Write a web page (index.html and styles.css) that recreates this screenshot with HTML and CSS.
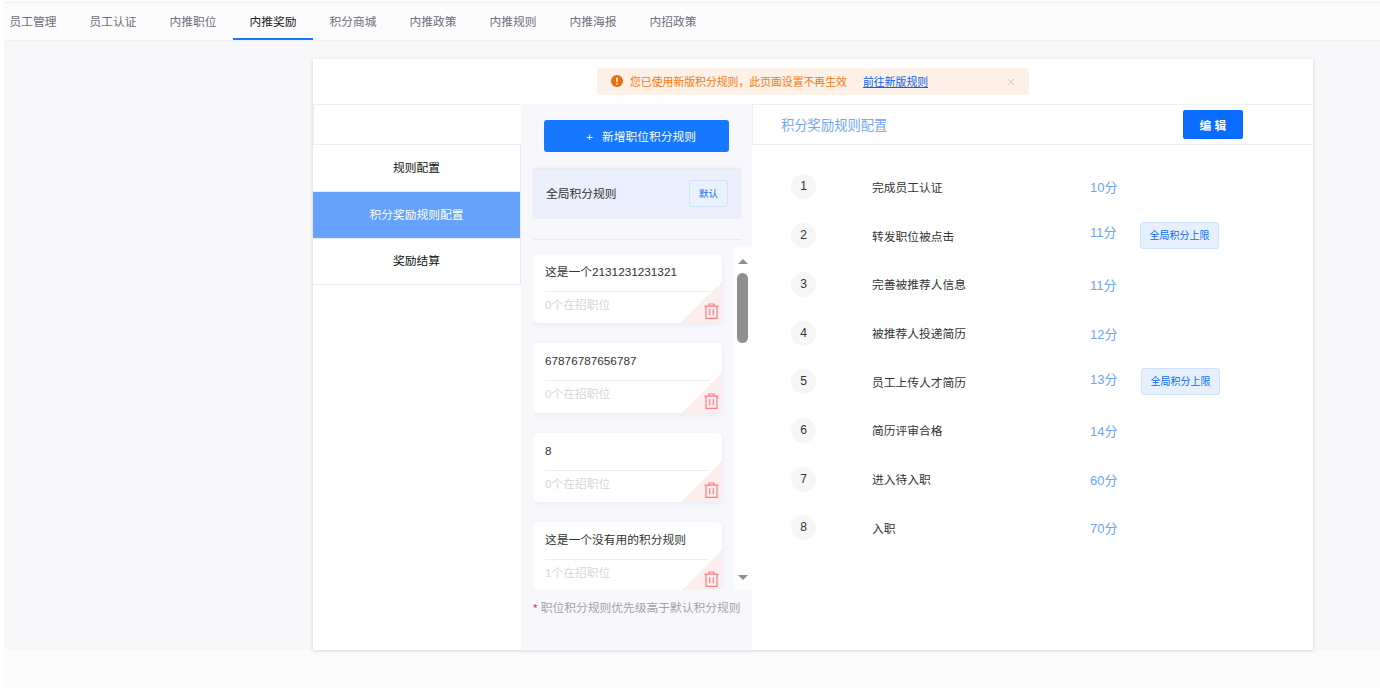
FILE: index.html
```html
<!DOCTYPE html>
<html lang="zh-CN">
<head>
  <meta charset="UTF-8" />
  <meta name="viewport" content="width=device-width, initial-scale=1.0" />
  <title>内推奖励</title>
  <link rel="stylesheet" href="styles.css">
</head>
<body>
  <div class="page">
    <div class="tabs">
      <a class="tab">员工管理</a>
      <a class="tab">员工认证</a>
      <a class="tab">内推职位</a>
      <a class="tab active">内推奖励</a>
      <a class="tab">积分商城</a>
      <a class="tab">内推政策</a>
      <a class="tab">内推规则</a>
      <a class="tab">内推海报</a>
      <a class="tab">内招政策</a>
    </div>

    <div class="main">
      <div class="panel">
        <div class="alert-row">
          <div class="alert">
            <svg class="alert-icon" viewBox="0 0 12 12"><circle cx="6" cy="6" r="6" fill="#ed6c0c"/><rect x="5.2" y="2.6" width="1.6" height="4.4" rx=".6" fill="#fff"/><rect x="5.2" y="8" width="1.6" height="1.6" rx=".7" fill="#fff"/></svg>
            <span class="alert-text">您已使用新版积分规则，此页面设置不再生效</span>
            <a class="alert-link">前往新版规则</a>
            <svg class="alert-close" viewBox="0 0 8 8"><path d="M1 1l6 6M7 1L1 7" stroke="#c9c9cf" stroke-width="1" fill="none"/></svg>
          </div>
        </div>

        <div class="columns">
          <div class="side">
            <div class="side-head"></div>
            <div class="side-item">规则配置</div>
            <div class="side-item active">积分奖励规则配置</div>
            <div class="side-item">奖励结算</div>
          </div>

          <div class="middle">
            <button class="add-btn"><span class="plus">+</span>新增职位积分规则</button>
            <div class="global-card">
              <span class="global-name">全局积分规则</span>
              <span class="default-tag">默认</span>
            </div>
            <div class="divider"></div>
            <div class="list-wrap">
              <div class="list">
                <div class="rule-card">
                  <div class="rule-name">这是一个2131231231321</div>
                  <div class="rule-count">0个在招职位</div>
                  <div class="corner"></div>
                  <svg class="trash" viewBox="0 0 15 16"><use href="#trash-icon"/></svg>
                </div>
                <div class="rule-card">
                  <div class="rule-name">67876787656787</div>
                  <div class="rule-count">0个在招职位</div>
                  <div class="corner"></div>
                  <svg class="trash" viewBox="0 0 15 16"><use href="#trash-icon"/></svg>
                </div>
                <div class="rule-card">
                  <div class="rule-name">8</div>
                  <div class="rule-count">0个在招职位</div>
                  <div class="corner"></div>
                  <svg class="trash" viewBox="0 0 15 16"><use href="#trash-icon"/></svg>
                </div>
                <div class="rule-card">
                  <div class="rule-name">这是一个没有用的积分规则</div>
                  <div class="rule-count">1个在招职位</div>
                  <div class="corner"></div>
                  <svg class="trash" viewBox="0 0 15 16"><use href="#trash-icon"/></svg>
                </div>
              </div>
              <div class="scrollbar">
                <span class="arrow-up"></span>
                <span class="thumb"></span>
                <span class="arrow-down"></span>
              </div>
            </div>
            <div class="note"><span class="star">*</span> 职位积分规则优先级高于默认积分规则</div>
          </div>

          <div class="right">
            <div class="right-head">
              <span class="right-title">积分奖励规则配置</span>
              <button class="edit-btn">编 辑</button>
            </div>
            <div class="rows">
              <div class="row"><span class="num">1</span><span class="name">完成员工认证</span><span class="score">10分</span></div>
              <div class="row"><span class="num">2</span><span class="name">转发职位被点击</span><span class="score raised">11分</span><span class="cap-tag">全局积分上限</span></div>
              <div class="row"><span class="num">3</span><span class="name">完善被推荐人信息</span><span class="score">11分</span></div>
              <div class="row"><span class="num">4</span><span class="name">被推荐人投递简历</span><span class="score">12分</span></div>
              <div class="row"><span class="num">5</span><span class="name">员工上传人才简历</span><span class="score raised slight">13分</span><span class="cap-tag shifted">全局积分上限</span></div>
              <div class="row"><span class="num">6</span><span class="name">简历评审合格</span><span class="score">14分</span></div>
              <div class="row"><span class="num">7</span><span class="name">进入待入职</span><span class="score">60分</span></div>
              <div class="row"><span class="num">8</span><span class="name">入职</span><span class="score">70分</span></div>
            </div>
          </div>
        </div>
      </div>
    </div>
  </div>

  <svg class="icon-defs" aria-hidden="true">
    <symbol id="trash-icon" viewBox="0 0 15 16">
      <path d="M.5 3.2h14M5 3V1h5v2M2 3.2V15.3h11V3.2M5.7 6.3v6M9.3 6.3v6" fill="none" stroke="#fb7c85" stroke-width="1.2"/>
    </symbol>
  </svg>
</body>
</html>
```

FILE: styles.css
```css
* {
  box-sizing: border-box;
}

html, body {
  height: 100%;
}

body {
  margin: 0;
  background: #fff;
  font-family: "Liberation Sans", "Noto Sans CJK SC", sans-serif;
  font-size: 11.75px;
  color: #333;
  overflow: hidden;
}

.page {
  height: 688px;
  margin-left: 4px;
  padding-top: 2px;
  background: #fcfcfd;
  overflow: hidden;
}

/* 顶部标签 */
.tabs {
  display: flex;
  height: 38px;
  margin-left: -11px;
  border-top: 1px solid #eeeef5;
}

.tab {
  width: 80px;
  height: 37px;
  line-height: 38px;
  text-align: center;
  color: #6d6d78;
  flex: none;
}

.tab.active {
  color: #222;
  border-bottom: 2px solid #1677ff;
}

.main {
  height: 610px;
  padding: 18px 0 0 309px;
  background: #f8f8fb;
  border-top: 1px solid #f0f0f8;
}

.panel {
  width: 1000px;
  height: 591px;
  background: #fff;
  box-shadow: 0 1px 4px rgba(0, 0, 0, 0.16);
  display: flex;
  flex-direction: column;
}

/* 提示条 */
.alert-row {
  height: 45px;
  padding: 9px 0 0 284px;
  flex: none;
}

.alert {
  width: 432px;
  height: 27px;
  display: flex;
  align-items: center;
  padding: 0 0 1px 14px;
  background: #fdf0e6;
  border-radius: 3px;
  font-size: 10.85px;
  color: #f5780f;
}

.alert-icon {
  width: 12px;
  height: 12px;
  flex: none;
  margin-right: 7px;
}

.alert-text {
  width: 217px;
  white-space: nowrap;
}

.alert-link {
  margin-left: 16px;
  color: #0a62f5;
  text-decoration: underline;
}

.alert-close {
  width: 8px;
  height: 8px;
  margin-left: 79px;
  margin-top: 2px;
}

.columns {
  flex: 1;
  display: flex;
  min-height: 0;
}

/* 左侧菜单 */
.side {
  width: 208px;
  flex: none;
}

.side-head {
  height: 41px;
  margin-right: -1px;
  border: 1px solid #eeeeee;
  background: #fff;
}

.side-item {
  height: 47px;
  line-height: 46px;
  text-align: center;
  color: #111;
  border-bottom: 1px solid #e9e9ee;
  border-right: 1px solid #e9e9ee;
}

.side-item:last-child {
  height: 46px;
  line-height: 44px;
}

.side-item.active {
  background: #64a2fb;
  color: #fff;
}

/* 中间列表 */
.middle {
  width: 231px;
  flex: none;
  padding: 16px 0 0 12px;
  background: #f8f8fc;
}

.add-btn {
  display: block;
  width: 185px;
  height: 32px;
  margin-left: 11px;
  padding: 0 0 1px 9px;
  border: none;
  border-radius: 3px;
  background: #1677ff;
  color: #fff;
  font: inherit;
}

.plus {
  margin-right: 9px;
}

.global-card {
  width: 208px;
  height: 50px;
  margin-top: 17px;
  padding: 0 13px 2px;
  display: flex;
  align-items: center;
  justify-content: space-between;
  background: #eaeffb;
  border-radius: 2px;
  box-shadow: 0 -1px 2px rgba(90, 110, 170, 0.14);
  color: #333;
}

.global-name {
  margin-bottom: 2px;
}

.default-tag {
  width: 39px;
  height: 27px;
  line-height: 25px;
  text-align: center;
  font-size: 9.5px;
  color: #0d6bf0;
  background: #e9f1fd;
  border: 1px solid #cfe1fb;
  border-radius: 3px;
}

.divider {
  width: 208px;
  height: 1px;
  margin: 20px 0 7px;
  background: #ebebf1;
}

.list-wrap {
  display: flex;
  height: 343px;
}

.list {
  width: 200px;
  height: 343px;
  padding: 7px 0 0;
  overflow: hidden;
  flex: none;
}

.rule-card {
  position: relative;
  width: 189px;
  height: 69.33px;
  margin-bottom: 20px;
  padding: 0 12px;
  background: #fff;
  border-radius: 5px;
  box-shadow: 0 2px 6px rgba(90, 100, 160, 0.09);
  overflow: hidden;
}

.rule-name {
  height: 38px;
  line-height: 35px;
  color: #333;
  border-bottom: 1px solid #ecedf5;
  margin-right: 1px;
  white-space: nowrap;
}

.rule-count {
  height: 31px;
  line-height: 26px;
  color: #d6d6d8;
}

.corner {
  position: absolute;
  right: 0;
  bottom: 0;
  width: 41px;
  height: 41px;
  background: linear-gradient(135deg, transparent 50%, #fdeeee 50%);
}

.trash {
  position: absolute;
  right: 3px;
  bottom: 4px;
  width: 15px;
  height: 16px;
}

.scrollbar {
  width: 19px;
  flex: none;
  background: #fdfdfe;
  display: flex;
  flex-direction: column;
  align-items: center;
  padding-top: 12px;
}

.arrow-up,
.arrow-down {
  width: 0;
  height: 0;
  border-left: 5px solid transparent;
  border-right: 5px solid transparent;
}

.arrow-up {
  border-bottom: 5px solid #8f8f8f;
}

.arrow-down {
  margin-top: 232px;
  border-top: 5px solid #8f8f8f;
}

.thumb {
  width: 11px;
  height: 70px;
  margin-top: 9px;
  border-radius: 6px;
  background: #8f8f8f;
}

.note {
  margin-top: 8px;
  color: #a2a2a8;
  white-space: nowrap;
}

.star {
  color: #f5222d;
}

/* 右侧配置 */
.right {
  flex: 1;
  min-width: 0;
}

.right-head {
  height: 41px;
  display: flex;
  align-items: center;
  justify-content: space-between;
  padding: 0 70px 1px 28px;
  border: 1px solid #eeeeee;
  border-right: none;
}

.right-title {
  font-size: 13.3px;
  color: #73a7f5;
}

.edit-btn {
  width: 60px;
  height: 29px;
  border: none;
  border-radius: 2px;
  background: #0a6cff;
  color: #fff;
  font: inherit;
  font-weight: bold;
}

.rows {
  padding-top: 17.6px;
}

.row {
  display: flex;
  align-items: center;
  height: 48.7px;
  padding-left: 39px;
}

.num {
  width: 25px;
  height: 25px;
  line-height: 25px;
  text-align: center;
  border-radius: 50%;
  background: #f6f6f6;
  color: #333;
  font-size: 12px;
  flex: none;
}

.name {
  width: 218px;
  margin-left: 56px;
  padding-bottom: 1px;
  flex: none;
  color: #333;
}

.score {
  width: 50px;
  flex: none;
  font-size: 13px;
  color: #6aa5f7;
}

.score.raised {
  margin-bottom: 8px;
}

.score.raised.slight {
  margin-bottom: 6px;
}

.cap-tag {
  width: 79px;
  height: 27px;
  line-height: 25px;
  text-align: center;
  font-size: 10px;
  color: #0d6bf0;
  background: #e6f0fd;
  border: 1px solid #cfe1fb;
  border-radius: 3px;
}

.cap-tag.shifted {
  margin-left: 1px;
}

.icon-defs {
  display: none;
}
```
